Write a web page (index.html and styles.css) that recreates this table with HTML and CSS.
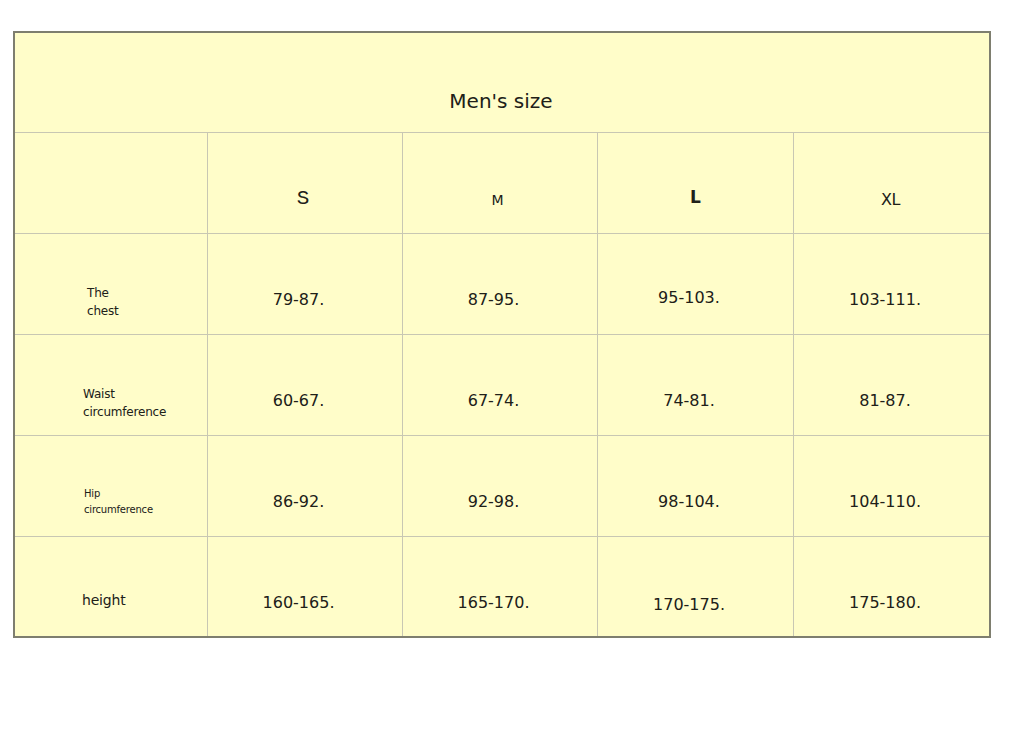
FILE: index.html
```html
<!DOCTYPE html>
<html lang="en">
<head>
<meta charset="utf-8">
<title>Men's size</title>
<link rel="stylesheet" href="styles.css">
</head>
<body>
<div class="sheet">
  <div class="title">Men's size</div>
  <div class="grid">
    <div class="cell"></div>
    <div class="cell head head-s">S</div>
    <div class="cell head head-m">M</div>
    <div class="cell head head-l">L</div>
    <div class="cell head head-xl last-col">XL</div>

    <div class="cell label label-chest"><span>The</span><span>chest</span></div>
    <div class="cell num">79-87.</div>
    <div class="cell num">87-95.</div>
    <div class="cell num up">95-103.</div>
    <div class="cell num last-col">103-111.</div>

    <div class="cell label label-waist"><span>Waist</span><span>circumference</span></div>
    <div class="cell num">60-67.</div>
    <div class="cell num">67-74.</div>
    <div class="cell num">74-81.</div>
    <div class="cell num last-col">81-87.</div>

    <div class="cell label label-hip"><span>Hip</span><span>circumference</span></div>
    <div class="cell num">86-92.</div>
    <div class="cell num">92-98.</div>
    <div class="cell num">98-104.</div>
    <div class="cell num last-col">104-110.</div>

    <div class="cell label label-height last-row"><span>height</span></div>
    <div class="cell num last-row">160-165.</div>
    <div class="cell num last-row">165-170.</div>
    <div class="cell num last-row down">170-175.</div>
    <div class="cell num last-row last-col">175-180.</div>
  </div>
</div>
</body>
</html>
```

FILE: styles.css
```css
html, body {
  margin: 0;
  padding: 0;
  background: #ffffff;
}

body {
  font-family: "DejaVu Sans", "Liberation Sans", sans-serif;
  color: #202018;
}

.sheet {
  box-sizing: border-box;
  width: 978px;
  margin: 31px 0 0 13px;
  border: 2px solid #7e7e6f;
  background: #fffdc9;
}

.title {
  box-sizing: border-box;
  height: 100px;
  padding-top: 56px;
  padding-right: 2px;
  border-bottom: 1px solid #c8c7b3;
  font-size: 20px;
  line-height: 24px;
  text-align: center;
}

.grid {
  display: grid;
  grid-template-columns: 193px 195px 195px 196px 1fr;
  grid-template-rows: 101px 101px 101px 101px 99px;
}

.cell {
  box-sizing: border-box;
  border-right: 1px solid #c8c7b3;
  border-bottom: 1px solid #c8c7b3;
  display: flex;
  justify-content: center;
  align-items: flex-start;
}

.last-col { border-right: none; }
.last-row { border-bottom: none; }

.head {
  padding-top: 56px;
  line-height: 20px;
}

.head-s {
  font-family: "Liberation Mono", "DejaVu Sans Mono", monospace;
  font-size: 21px;
  padding-right: 4px;
  padding-top: 56px;
}

.head-m {
  font-size: 14px;
  padding-right: 5px;
  padding-top: 57px;
}

.head-l {
  font-size: 17px;
  font-weight: bold;
  padding-top: 54px;
}

.head-xl {
  font-size: 16px;
  letter-spacing: -0.5px;
  padding-right: 2px;
  padding-top: 57px;
}

.num {
  font-size: 16px;
  line-height: 20px;
  padding-top: 56px;
  padding-right: 13px;
}

.num.up { padding-top: 54px; }
.num.down { padding-top: 58px; }

.label {
  flex-direction: column;
  justify-content: flex-start;
  align-items: flex-start;
  font-size: 12px;
  line-height: 18px;
  letter-spacing: -0.2px;
}

.label-chest { padding: 50px 0 0 72px; }
.label-waist { padding: 50px 0 0 68px; }

.label-hip {
  font-size: 10px;
  line-height: 16px;
  padding: 50px 0 0 69px;
}

.label-height {
  font-size: 14px;
  line-height: 20px;
  padding: 53px 0 0 67px;
}
```
